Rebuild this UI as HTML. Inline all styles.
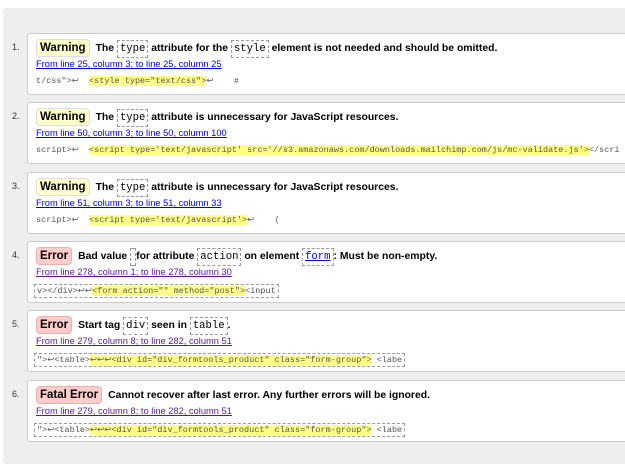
<!DOCTYPE html>
<html><head><meta charset="utf-8"><style>
body{margin:0;width:625px;height:468px;background:#fff;overflow:hidden;font-family:"Liberation Sans",Arial,sans-serif;position:relative}
.panel{position:absolute;left:3px;top:8px;width:640px;height:456px;background:#eee;border-radius:3px}
.card{position:absolute;left:27px;width:640px;height:60px;background:#fff;border:1px solid #ccc;border-radius:3px}
.num{position:absolute;left:12px;font-size:9px;color:#333}
.msg{position:absolute;left:8px;top:5px;font-size:10.4px;font-weight:bold;color:#000;white-space:nowrap}
.b{display:inline-block;padding:2px 3px;border:1px solid #ddd;border-radius:4px;margin-right:6px;font-size:11.5px}
.w{background:#ffc}.e{background:#fcc;border-color:#e9b0b0}
code{font-family:"Liberation Mono",monospace;font-weight:normal;font-size:10.6px;border:1px dashed #999;padding:2px 2px}
.lk{position:absolute;left:8px;top:25px;font-size:9.3px;color:#00e;text-decoration:underline;white-space:nowrap}
.v{color:#551a8b}
.ext{position:absolute;left:8px;top:42px;font-family:"Liberation Mono",monospace;font-size:8.5px;color:#555;white-space:pre}
.bx{border:1px dashed #999;padding:1px 2px;left:6px}
.hl{background:#ff8;color:#555}
</style></head><body>
<div class="panel"></div>

<span class="num" style="top:42px">1.</span>
<div class="card" style="top:33px"><div class="msg"><span class="b w">Warning</span>The <code>type</code> attribute for the <code>style</code> element is not needed and should be omitted.</div>
<div class="lk">From line 25, column 3; to line 25, column 25</div>
<div class="ext">t/css"&gt;↩  <span class="hl">&lt;style type="text/css"&gt;</span>↩    #</div></div>

<span class="num" style="top:111px">2.</span>
<div class="card" style="top:102px"><div class="msg"><span class="b w">Warning</span>The <code>type</code> attribute is unnecessary for JavaScript resources.</div>
<div class="lk">From line 50, column 3; to line 50, column 100</div>
<div class="ext">script&gt;↩  <span class="hl">&lt;script type='text/javascript' src='//s3.amazonaws.com/downloads.mailchimp.com/js/mc-validate.js'&gt;</span>&lt;/scri</div></div>

<span class="num" style="top:181px">3.</span>
<div class="card" style="top:172px"><div class="msg"><span class="b w">Warning</span>The <code>type</code> attribute is unnecessary for JavaScript resources.</div>
<div class="lk">From line 51, column 3; to line 51, column 33</div>
<div class="ext">script&gt;↩  <span class="hl">&lt;script type='text/javascript'&gt;</span>↩    (</div></div>

<span class="num" style="top:250px">4.</span>
<div class="card" style="top:241px"><div class="msg"><span class="b e">Error</span>Bad value <code> </code> for attribute <code>action</code> on element <code style="color:#00e;text-decoration:underline">form</code>: Must be non-empty.</div>
<div class="lk v">From line 278, column 1; to line 278, column 30</div>
<div class="ext bx">v&gt;&lt;/div&gt;↩↩<span class="hl">&lt;form action="" method="post"&gt;</span>&lt;input</div></div>

<span class="num" style="top:319px">5.</span>
<div class="card" style="top:310px"><div class="msg"><span class="b e">Error</span>Start tag <code>div</code> seen in <code>table</code>.</div>
<div class="lk v">From line 279, column 8; to line 282, column 51</div>
<div class="ext bx">"&gt;↩&lt;table&gt;<span class="hl">↩↩↩&lt;div id="div_formtools_product" class="form-group"&gt;</span> &lt;labe</div></div>

<span class="num" style="top:389px">6.</span>
<div class="card" style="top:380px"><div class="msg"><span class="b e">Fatal Error</span>Cannot recover after last error. Any further errors will be ignored.</div>
<div class="lk v">From line 279, column 8; to line 282, column 51</div>
<div class="ext bx">"&gt;↩&lt;table&gt;<span class="hl">↩↩↩&lt;div id="div_formtools_product" class="form-group"&gt;</span> &lt;labe</div></div>
</body></html>
